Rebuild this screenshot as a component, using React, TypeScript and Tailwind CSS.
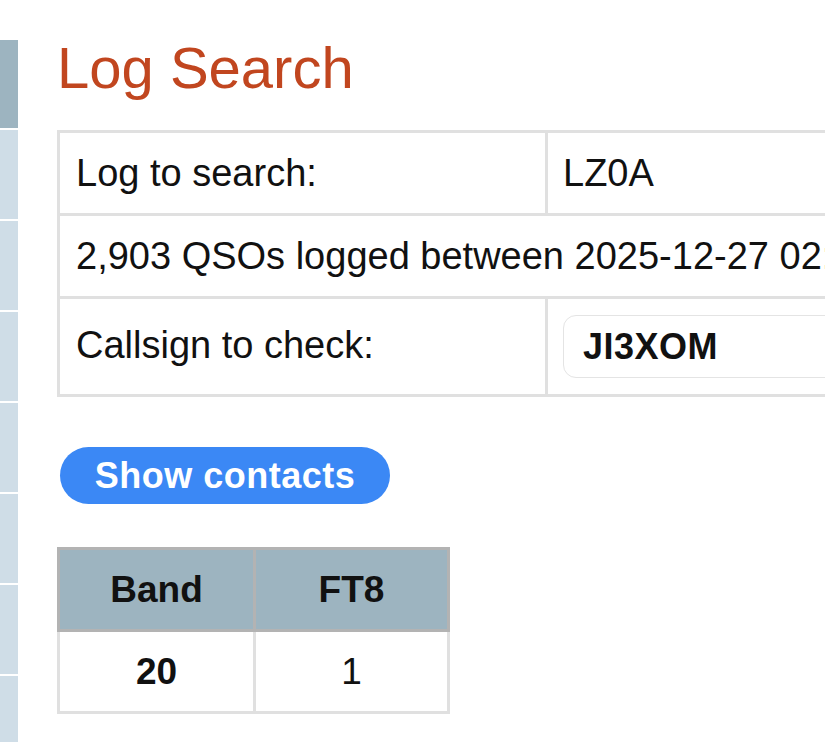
export default function App() {
  const light = [0, 1, 2, 3, 4, 5, 6];
  return (
    <div
      className="flex h-[742px] w-[825px] overflow-hidden bg-white text-[#111]"
      style={{ fontFamily: '"Liberation Sans", Arial, sans-serif' }}
    >
      <div className="mt-[40px] flex w-[18px] shrink-0 flex-col gap-[2px] overflow-hidden">
        <div className="h-[88px] shrink-0 bg-[#9db4c0]" />
        {light.map((i) => (
          <div key={i} className="h-[89px] shrink-0 bg-[#cfdde7]" />
        ))}
      </div>
      <div className="ml-[39px] shrink-0 pt-[35px]">
        <h1 className="text-[58px] leading-[65px] text-[#c1461f]">Log Search</h1>
        <table className="mt-[30px] w-[960px] border-collapse text-[38px] leading-[44px]">
          <tbody>
            <tr className="h-[83px]">
              <td className="w-[488px] border-[3px] border-[#e0e0e0] pl-[16px] align-middle">Log to search:</td>
              <td className="border-[3px] border-[#e0e0e0] pl-[15px] align-middle">LZ0A</td>
            </tr>
            <tr className="h-[83px]">
              <td colSpan={2} className="whitespace-nowrap border-[3px] border-[#e0e0e0] pl-[16px] align-middle">
                2,903 QSOs logged between 2025-12-27 02:00 and 2025-12-28 23:59
              </td>
            </tr>
            <tr>
              <td className="border-[3px] border-[#e0e0e0] pb-[4px] pl-[16px] align-middle">Callsign to check:</td>
              <td className="border-[3px] border-[#e0e0e0] py-[16px] pl-[15px] align-middle">
                <div className="flex h-[63px] w-[400px] items-center rounded-[13px] border border-[#e4e4e4] pl-[19px] text-[36px] font-bold tracking-[0.5px]">
                  JI3XOM
                </div>
              </td>
            </tr>
          </tbody>
        </table>
        <button className="ml-[3px] mt-[50px] flex h-[57px] w-[330px] items-center justify-center rounded-full bg-[#3b88f5] text-[36px] font-bold tracking-[0.5px] text-white">
          Show contacts
        </button>
        <table className="mt-[43px] border-collapse text-[37px] leading-[44px]">
          <thead>
            <tr className="h-[82px] bg-[#9db4c0]">
              <th className="w-[196px] border-[3px] border-[#b3b3b3] text-center font-bold">Band</th>
              <th className="w-[194px] border-[3px] border-[#b3b3b3] text-center font-bold">FT8</th>
            </tr>
          </thead>
          <tbody>
            <tr className="h-[82px]">
              <td className="border-[3px] border-[#e0e0e0] text-center font-bold">20</td>
              <td className="border-[3px] border-[#e0e0e0] text-center">1</td>
            </tr>
          </tbody>
        </table>
      </div>
    </div>
  );
}
